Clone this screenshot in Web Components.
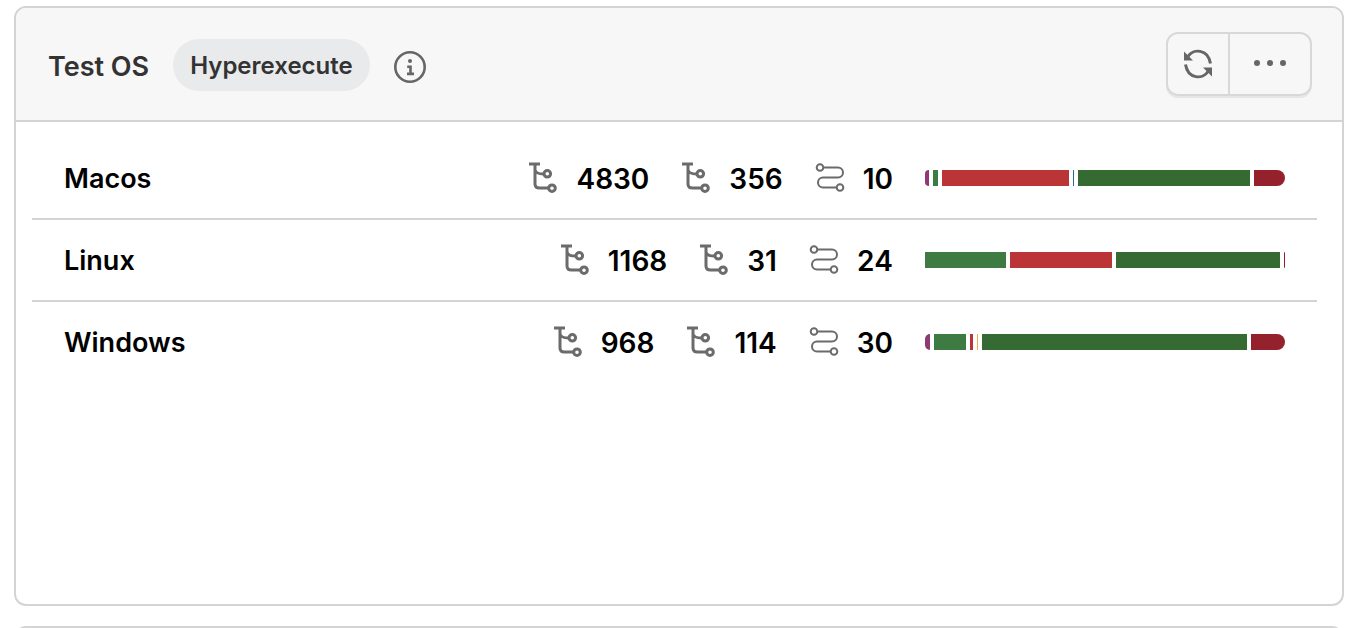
<!DOCTYPE html>
<html lang="en">
<head>
<meta charset="utf-8">
<title>Test OS</title>
<style>
html { height: 100%; overflow: hidden; }
body {
  margin: 0; box-sizing: border-box; height: 100vh; padding: 6px 10px 0 14px;
  display: flex; flex-direction: column; gap: 20px;
  background: #fff; font-family: Inter, "Liberation Sans", sans-serif; overflow: hidden;
}
widget-card.main { flex: 1; }
widget-card.next { flex: 0 0 2px; overflow: hidden; }
</style>
</head>
<body>
<widget-card class="main">
  <card-header slot="header" heading="Test OS" tag="Hyperexecute"></card-header>
  <os-list>
    <os-row name="Macos" tests="4830" jobs="356" flows="10" bar="purple:4 pass:5 fail:127 blue:1 done:172 error:31"></os-row>
    <os-row name="Linux" tests="1168" jobs="31" flows="24" bar="pass:81 fail:102 done:164 error:1"></os-row>
    <os-row name="Windows" tests="968" jobs="114" flows="30" bar="purple:5 pass:32 fail:3 yellow:1 done:265 error:34"></os-row>
  </os-list>
</widget-card>
<widget-card class="next"></widget-card>

<script>
class BaseElement extends HTMLElement {
  connectedCallback() {
    if (!this.shadowRoot) this.attachShadow({ mode: "open" }).innerHTML = this.render();
  }
}

customElements.define("widget-card", class extends BaseElement {
  render() {
    return `<style>
      :host { display: block; min-height: 0; }
      section { box-sizing: border-box; height: 100%; min-height: 24px; border: 2px solid #d4d4d4; border-radius: 12px; overflow: hidden; background: #fff; }
    </style>
    <section><slot name="header"></slot><slot></slot></section>`;
  }
});

customElements.define("card-header", class extends BaseElement {
  render() {
    return `<style>
      :host { display: block; }
      header { display: flex; align-items: center; padding: 24px 30px 24px 32px; background: #f7f7f7; border-bottom: 2px solid #d4d4d4; color: #333; }
      h2 { margin: 0 24px 0 0; padding-top: 6px; font-size: 27px; line-height: 40px; font-weight: 600; }
      .tag { box-sizing: border-box; height: 52px; margin-top: 2px; padding: 2px 17px 0; border-radius: 26px; background: #e9eaec; font-size: 24px; line-height: 50px; font-weight: 600; }
      button { font: inherit; border: 0; background: none; padding: 0; color: #666; display: flex; align-items: center; justify-content: center; }
      svg { display: block; }
      .info { margin-left: 24px; padding-top: 6px; }
      .group { margin-left: auto; display: flex; height: 60px; border: 2px solid #d8d8d8; border-radius: 12px; box-shadow: 0 2px 0 #e6e6e6; }
      .refresh { width: 62px; border-right: 2px solid #d8d8d8; }
      .more { width: 80px; padding-bottom: 2px; }
    </style>
    <header>
      <h2>${this.getAttribute("heading")}</h2>
      <span class="tag">${this.getAttribute("tag")}</span>
      <button class="info" type="button" aria-label="Information">
        <svg width="32" height="32" viewBox="0 0 32 32" fill="none" stroke="currentColor"><circle cx="16" cy="16" r="14.7" stroke-width="2.6"/><circle cx="16" cy="10" r="2" fill="currentColor" stroke="none"/><path d="M13.200 15.700H16.500V22.500M13 22.900H20" stroke-width="2.600"/></svg>
      </button>
      <div class="group">
        <button class="refresh" type="button" aria-label="Refresh">
          <svg width="28" height="30" viewBox="0 0 28 30" fill="none" stroke="currentColor" stroke-width="3"><path d="M4 7.500C9-.5 24-.5 26.500 14.500M24 22.500C19 30.500 4 30.500 1.500 15.500"/><path d="M0 2.500V11.500H9ZM28 27.500V18.500H19Z" fill="currentColor" stroke="none"/></svg>
        </button>
        <button class="more" type="button" aria-label="More options">
          <svg width="32" height="8" viewBox="0 0 32 8" fill="currentColor"><circle cx="3" cy="4" r="3"/><circle cx="16" cy="4" r="3"/><circle cx="29" cy="4" r="3"/></svg>
        </button>
      </div>
    </header>`;
  }
});

customElements.define("os-list", class extends BaseElement {
  render() {
    return `<style>
      :host { display: block; padding: 16px 25px 16px 16px; }
      ::slotted(:not(:last-child)) { border-bottom: 2px solid #d4d4d4; }
    </style>
    <div role="list"><slot></slot></div>`;
  }
});

customElements.define("count-stat", class extends BaseElement {
  render() {
    const icon = this.getAttribute("icon") === "flow"
      ? `<g stroke-width="2"><circle cx="5" cy="4.500" r="3.300"/><circle cx="25" cy="24.500" r="3.300"/><path d="M8.500 4.500H23a5 5 0 0 1 0 10H8a5 5 0 0 0 0 10H21.500"/></g>`
      : `<path d="M1 1H12" stroke-width="3"/><path d="M7 2V21Q7 25 11.500 25H20.500M7 7Q8 11 15.500 11" stroke-width="3"/><g stroke-width="3"><circle cx="19.300" cy="10.800" r="3.300"/><circle cx="24" cy="25.200" r="3.300"/></g>`;
    return `<style>
      :host { display: flex; align-items: center; gap: 16px; font-size: 28px; line-height: 38px; font-weight: 600; font-kerning: none; color: #000; }
      svg { display: block; }
      span { padding-top: 2px; }
    </style>
    <svg width="32" height="30" viewBox="0 0 32 30" overflow="visible" fill="none" stroke="#6b6b6b" aria-hidden="true">${icon}</svg><span>${this.getAttribute("value")}</span>`;
  }
});

customElements.define("status-bar", class extends BaseElement {
  render() {
    const colors = { purple: "#8d3b72", pass: "#3d7b42", fail: "#bc3536", blue: "#2f6690", yellow: "#edae49", done: "#356b33", error: "#94212b" };
    const parts = this.getAttribute("parts").split(" ").map(p => p.split(":"));
    return `<style>
      :host { display: flex; gap: 4px; height: 16px; }
      i { flex: 1 0 0; }
      .purple { border-radius: 8px 0 0 8px; }
      .error { border-radius: 0 8px 8px 0; }
    </style>` + parts.map(([k, n]) => `<i class="${k}" style="flex-grow:${n};background:${colors[k]}"></i>`).join("");
  }
});

customElements.define("os-row", class extends BaseElement {
  render() {
    const a = n => this.getAttribute(n);
    return `<style>
      :host { display: block; }
      .row { display: flex; align-items: center; gap: 32px; padding: 20px 32px; }
      .name { flex: 1; padding-top: 2px; font-size: 27px; line-height: 38px; font-weight: 600; color: #000; }
      status-bar { width: 360px; }
    </style>
    <div class="row" role="listitem">
      <span class="name">${a("name")}</span>
      <count-stat icon="tree" value="${a("tests")}"></count-stat>
      <count-stat icon="tree" value="${a("jobs")}"></count-stat>
      <count-stat icon="flow" value="${a("flows")}"></count-stat>
      <status-bar parts="${a("bar")}"></status-bar>
    </div>`;
  }
});
</script>
</body>
</html>
